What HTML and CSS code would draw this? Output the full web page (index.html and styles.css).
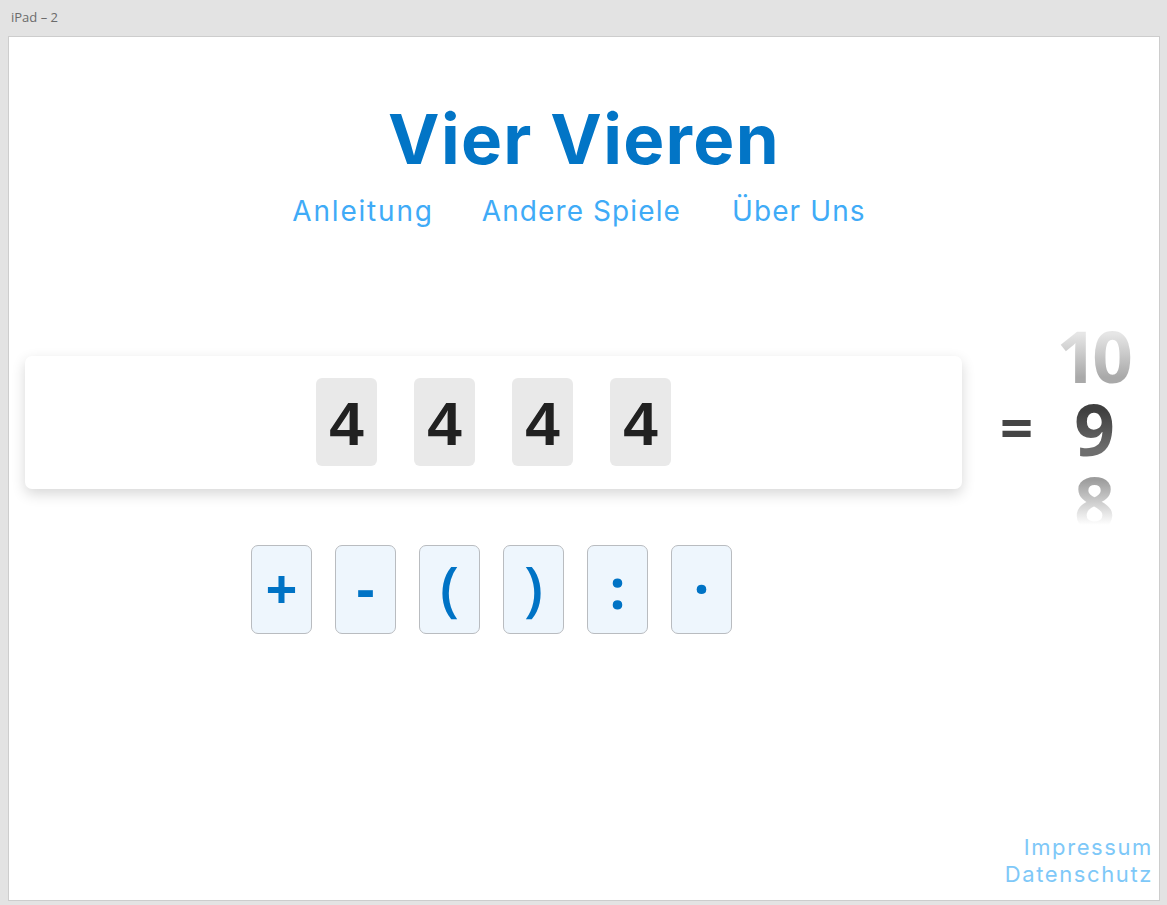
FILE: index.html
```html
<!DOCTYPE html>
<html lang="de">
<head>
<meta charset="utf-8">
<title>Vier Vieren</title>
<link rel="stylesheet" href="styles.css">
</head>
<body>
<div class="frame-label">iPad – 2</div>
<div class="artboard">
  <header class="top">
    <h1 class="title">Vier Vieren</h1>
    <nav class="nav">
      <a class="nav-link" href="#">Anleitung</a>
      <a class="nav-link" href="#">Andere Spiele</a>
      <a class="nav-link" href="#">Über Uns</a>
    </nav>
  </header>
  <main class="game">
    <div class="row">
      <div class="card">
        <div class="tile">4</div>
        <div class="tile">4</div>
        <div class="tile">4</div>
        <div class="tile">4</div>
      </div>
      <div class="equals">=</div>
      <div class="results">
        <div class="num num-prev">10</div>
        <div class="num num-cur">9</div>
        <div class="num num-next">8</div>
      </div>
    </div>
    <div class="ops">
      <button class="op">+</button>
      <button class="op">-</button>
      <button class="op">(</button>
      <button class="op">)</button>
      <button class="op">:</button>
      <button class="op">·</button>
    </div>
  </main>
  <footer class="footer">
    <a class="foot-link" href="#">Impressum</a>
    <a class="foot-link" href="#">Datenschutz</a>
  </footer>
</div>
</body>
</html>
```
FILE: styles.css
```css
html, body {
  margin: 0;
  padding: 0;
}
body {
  background: #e3e3e3;
  font-family: "Open Sans", "Noto Sans", sans-serif;
  width: 1167px;
  height: 905px;
  overflow: hidden;
}
.frame-label {
  height: 36px;
  box-sizing: border-box;
  padding: 9px 0 0 11px;
  font-size: 13px;
  line-height: 16px;
  color: #6b6b6b;
}
.artboard {
  margin-left: 8px;
  width: 1152px;
  height: 865px;
  box-sizing: border-box;
  border: 1px solid #cdcdcd;
  background: #fff;
  display: flex;
  flex-direction: column;
}
.top {
  display: flex;
  flex-direction: column;
  align-items: center;
  padding-top: 60px;
}
.title {
  margin: 0;
  font-family: "Inter", sans-serif;
  font-weight: 700;
  font-size: 69px;
  line-height: 84px;
  letter-spacing: 1.3px;
  color: #0275c6;
}
.nav {
  display: flex;
  gap: 48px;
  margin-top: 13px;
  margin-right: 10px;
}
.nav-link {
  font-family: "Inter", sans-serif;
  font-size: 28px;
  line-height: 34px;
  letter-spacing: 1.1px;
  color: #3fabf7;
  text-decoration: none;
}
.nav-link:first-child {
  letter-spacing: 1.8px;
}
.nav-link:last-child {
  margin-left: 3px;
}
.game {
  display: flex;
  flex-direction: column;
  margin-top: 128px;
}
.row {
  display: flex;
  align-items: center;
  height: 133px;
  padding-left: 16px;
}
.card {
  width: 937px;
  height: 133px;
  flex: none;
  box-sizing: border-box;
  background: #fff;
  border-radius: 7px;
  box-shadow: 0 5px 14px rgba(0, 0, 0, 0.16);
  display: flex;
  justify-content: center;
  align-items: center;
  gap: 37px;
  padding-bottom: 1px;
}
.tile {
  width: 61px;
  height: 88px;
  border-radius: 6px;
  background: #e9e9e9;
  display: flex;
  align-items: center;
  justify-content: center;
  font-family: "Liberation Sans", Arial, sans-serif;
  font-weight: 700;
  font-size: 62px;
  color: #212121;
  padding-top: 2px;
  box-sizing: border-box;
}
.equals {
  margin-left: 38px;
  font-family: "Open Sans", sans-serif;
  font-weight: 700;
  font-size: 58px;
  line-height: 60px;
  color: #454545;
  padding-top: 8px;
}
.results {
  margin-left: 19px;
  width: 80px;
  height: 219px;
  flex: none;
  display: flex;
  flex-direction: column;
  align-items: center;
  margin-top: 12px;
}
.num {
  font-family: "Open Sans", sans-serif;
  font-weight: 700;
  font-size: 71px;
  line-height: 73px;
  letter-spacing: -5px;
  padding-right: 5px;
  margin-right: -5px;
  -webkit-background-clip: text;
  background-clip: text;
  color: transparent;
}
.num-prev {
  background-image: linear-gradient(to bottom, #e6e6e6 20%, #a9a9a9 80%);
}
.num-cur {
  background-image: linear-gradient(to bottom, #3f3f3f 25%, #6e6e6e 80%);
}
.num-next {
  background-image: linear-gradient(to bottom, #9c9c9c 20%, #ffffff 82%);
}
.ops {
  display: flex;
  justify-content: center;
  gap: 23px;
  margin-top: 56px;
  padding-left: 16px;
  width: 933px;
}
.op {
  width: 61px;
  height: 89px;
  box-sizing: border-box;
  border: 1px solid #b9bcc0;
  border-radius: 7px;
  background: #eef6fd;
  color: #0073c5;
  font-family: "Open Sans", sans-serif;
  font-weight: 600;
  font-size: 60px;
  line-height: 1;
  padding: 0 0 5px;
  display: flex;
  align-items: center;
  justify-content: center;
}
.op:first-child,
.op:nth-child(2),
.op:nth-child(5),
.op:nth-child(6) {
  font-weight: 700;
  font-size: 56px;
}
.footer {
  margin-top: auto;
  display: flex;
  flex-direction: column;
  align-items: flex-end;
  padding: 0 6px 12px 0;
}
.foot-link {
  font-family: "Inter", sans-serif;
  font-size: 22px;
  line-height: 27px;
  letter-spacing: 1.6px;
  color: #7ec8f8;
  text-decoration: none;
}
```
